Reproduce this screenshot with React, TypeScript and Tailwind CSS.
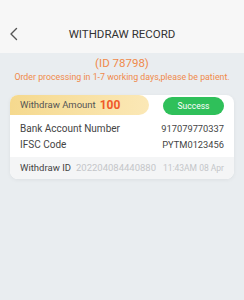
import React from "react";

export default function App() {
    return (
        <div
            className="w-[244px] h-[300px] bg-[#e9edf0] flex flex-col overflow-hidden"
            style={{ fontFamily: "Roboto, 'Liberation Sans', sans-serif" }}
        >
            <div className="h-[53px] bg-[#f7f7f7] flex items-end pb-[13px] relative">
                <svg className="absolute left-[9px] top-[27px]" width="10" height="14" viewBox="0 0 10 14" fill="none">
                    <path d="M7.5 1.5L2 7l5.5 5.5" stroke="#555" strokeWidth="1.4" strokeLinecap="round" strokeLinejoin="round" />
                </svg>
                <div className="w-full text-center text-[11.5px] text-[#333] leading-none">WITHDRAW RECORD</div>
            </div>

            <div className="flex flex-col items-center pt-[3px] text-[#f08a4b]">
                <div className="text-[11.5px] leading-[14px]">(ID 78798)</div>
                <div className="text-[8.8px] leading-[12px] mt-[1px]">Order processing in 1-7 working days,please be patient.</div>
            </div>

            <div className="mx-[10px] mt-[12px] bg-white rounded-[8px] shadow-[0_1px_4px_rgba(0,0,0,0.06)] overflow-hidden">
                <div className="flex items-center justify-between pr-[10px]">
                    <div className="h-[20px] w-[139px] rounded-r-full bg-gradient-to-r from-[#f5d98e] to-[#fbe8b6] flex items-center pl-[10px] gap-[4px]">
                        <span className="text-[9.5px] text-[#555]">Withdraw Amount</span>
                        <span className="text-[12px] font-bold text-[#f05a2a]">100</span>
                    </div>
                    <div className="mt-[2px] h-[18px] w-[61px] rounded-full bg-[#2fc05a] text-white text-[8.5px] flex items-center justify-center">
                        Success
                    </div>
                </div>
                <div className="px-[10px] pt-[8px] pb-[6px] text-[#444] flex flex-col gap-[4px]">
                    <div className="flex justify-between items-center leading-[12px]">
                        <span className="text-[10px]">Bank Account Number</span>
                        <span className="text-[9.3px]">917079770337</span>
                    </div>
                    <div className="flex justify-between items-center leading-[12px]">
                        <span className="text-[10px]">IFSC Code</span>
                        <span className="text-[9.3px]">PYTM0123456</span>
                    </div>
                </div>
                <div className="bg-[#f4f5f6] h-[22px] px-[10px] flex items-center text-[9.5px]">
                    <span className="text-[#444]">Withdraw ID</span>
                    <span className="ml-[5px] text-[#c4c6c9]">202204084440880</span>
                    <span className="ml-auto text-[8.5px] text-[#c4c6c9]">11:43AM 08 Apr</span>
                </div>
            </div>
        </div>
    );
}
